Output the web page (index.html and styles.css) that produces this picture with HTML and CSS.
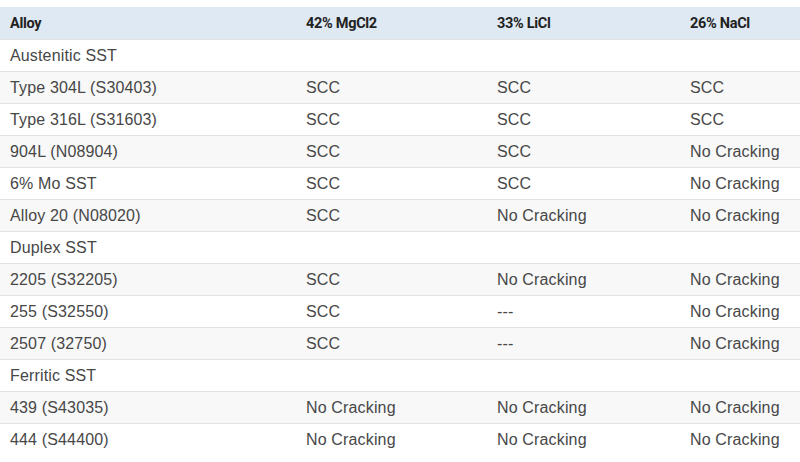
FILE: index.html
```html
<!DOCTYPE html>
<html>
<head>
<meta charset="utf-8">
<link rel="stylesheet" href="styles.css">
</head>
<body>
<table class="data">
<thead>
<tr><th class="c1">Alloy</th><th class="c2">42% MgCl2</th><th class="c3">33% LiCl</th><th class="c4">26% NaCl</th></tr>
</thead>
<tbody>
<tr><td>Austenitic SST</td><td></td><td></td><td></td></tr>
<tr><td>Type 304L (S30403)</td><td>SCC</td><td>SCC</td><td>SCC</td></tr>
<tr><td>Type 316L (S31603)</td><td>SCC</td><td>SCC</td><td>SCC</td></tr>
<tr><td>904L (N08904)</td><td>SCC</td><td>SCC</td><td>No Cracking</td></tr>
<tr><td>6% Mo SST</td><td>SCC</td><td>SCC</td><td>No Cracking</td></tr>
<tr><td>Alloy 20 (N08020)</td><td>SCC</td><td>No Cracking</td><td>No Cracking</td></tr>
<tr><td>Duplex SST</td><td></td><td></td><td></td></tr>
<tr><td>2205 (S32205)</td><td>SCC</td><td>No Cracking</td><td>No Cracking</td></tr>
<tr><td>255 (S32550)</td><td>SCC</td><td>---</td><td>No Cracking</td></tr>
<tr><td>2507 (32750)</td><td>SCC</td><td>---</td><td>No Cracking</td></tr>
<tr><td>Ferritic SST</td><td></td><td></td><td></td></tr>
<tr><td>439 (S43035)</td><td>No Cracking</td><td>No Cracking</td><td>No Cracking</td></tr>
<tr><td>444 (S44400)</td><td>No Cracking</td><td>No Cracking</td><td>No Cracking</td></tr>
</tbody>
</table>
</body>
</html>
```
FILE: styles.css
```css
html, body {
  margin: 0;
  padding: 0;
  background: #ffffff;
}
body {
  padding-top: 7px;
  font-family: "Liberation Sans", Arial, sans-serif;
  color: #474747;
}
.data {
  width: 800px;
  border-collapse: collapse;
  table-layout: fixed;
}
.data th, .data td {
  height: 31px;
  padding: 0 0 0 10px;
  text-align: left;
  vertical-align: middle;
  white-space: nowrap;
}
.data th {
  background: #dfe9f3;
  font-family: Roboto, "Liberation Sans", sans-serif;
  font-weight: 700;
  font-size: 14.5px;
  color: #222222;
  letter-spacing: -0.3px;
  height: 32px;
}
.data td {
  font-size: 16px;
  letter-spacing: 0.15px;
  border-top: 1px solid #e2e2e2;
}
.data tbody tr:nth-child(even) td {
  background: #f8f8f8;
}
.c1 { width: 286px; }
.c2 { width: 181px; }
.c3 { width: 183px; }
.c4 { width: 110px; }
```
